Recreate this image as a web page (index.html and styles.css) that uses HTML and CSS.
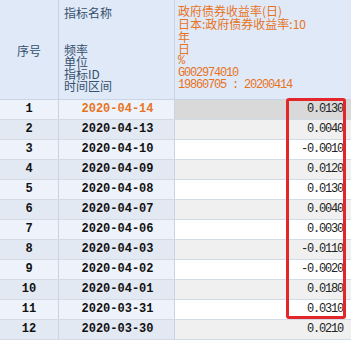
FILE: index.html
```html
<!DOCTYPE html>
<html>
<head>
<meta charset="utf-8">
<link rel="stylesheet" href="styles.css">
</head>
<body>
<div class="sheet">
  <div class="head">
    <div class="h-idx">序号</div>
    <div class="h-labels">
      <div class="l">指标名称</div>
      <div class="l"></div>
      <div class="l"></div>
      <div class="l">频率</div>
      <div class="l">单位</div>
      <div class="l">指标ID</div>
      <div class="l">时间区间</div>
    </div>
    <div class="h-vals">
      <div class="l">政府债券收益率(日)</div>
      <div class="l">日本:政府债券收益率:10</div>
      <div class="l">年</div>
      <div class="l">日</div>
      <div class="l">%</div>
      <div class="l">G002974010</div>
      <div class="l">19860705 : 20200414</div>
    </div>
  </div>
  <div class="rows">
    <div class="row odd sel"><div class="c-idx">1</div><div class="c-date hl">2020-04-14</div><div class="c-val">0.0130</div></div>
    <div class="row even"><div class="c-idx">2</div><div class="c-date">2020-04-13</div><div class="c-val">0.0040</div></div>
    <div class="row odd"><div class="c-idx">3</div><div class="c-date">2020-04-10</div><div class="c-val">-0.0010</div></div>
    <div class="row even"><div class="c-idx">4</div><div class="c-date">2020-04-09</div><div class="c-val">0.0120</div></div>
    <div class="row odd"><div class="c-idx">5</div><div class="c-date">2020-04-08</div><div class="c-val">0.0130</div></div>
    <div class="row even"><div class="c-idx">6</div><div class="c-date">2020-04-07</div><div class="c-val">0.0040</div></div>
    <div class="row odd"><div class="c-idx">7</div><div class="c-date">2020-04-06</div><div class="c-val">0.0030</div></div>
    <div class="row even"><div class="c-idx">8</div><div class="c-date">2020-04-03</div><div class="c-val">-0.0110</div></div>
    <div class="row odd"><div class="c-idx">9</div><div class="c-date">2020-04-02</div><div class="c-val">-0.0020</div></div>
    <div class="row even"><div class="c-idx">10</div><div class="c-date">2020-04-01</div><div class="c-val">0.0180</div></div>
    <div class="row odd"><div class="c-idx">11</div><div class="c-date">2020-03-31</div><div class="c-val">0.0310</div></div>
    <div class="row even"><div class="c-idx">12</div><div class="c-date">2020-03-30</div><div class="c-val">0.0210</div></div>
  </div>
  <div class="mark"></div>
</div>
</body>
</html>
```
FILE: styles.css
```css
html, body {
  margin: 0;
  padding: 0;
  background: #ffffff;
}
.sheet {
  position: relative;
  width: 351px;
  height: 341px;
  overflow: hidden;
  font-family: "Noto Sans CJK SC", "Liberation Sans", sans-serif;
  font-size: 12px;
}
.head {
  display: grid;
  grid-template-columns: 59px 116px 176px;
  height: 99px;
  background: #dfe9f7;
  border-bottom: 1px solid #c9d5e5;
}
.h-idx {
  border-right: 1px solid #c7d3e3;
  display: flex;
  align-items: center;
  justify-content: center;
  color: #36506e;
  padding-top: 2px;
}
.h-labels {
  border-right: 1px solid #c7d3e3;
  padding: 7px 0 0 5px;
  color: #36506e;
}
.h-vals {
  padding: 5px 0 0 3px;
  color: #e8731e;
}
.l {
  height: 12px;
  line-height: 12px;
  white-space: nowrap;
}
.h-labels .l:first-child { height: 13px; }
.h-labels .l:nth-child(2), .h-labels .l:nth-child(3) { height: 12px; }
.h-vals .l:first-child, .h-vals .l:nth-child(2) { height: 13px; }
.h-vals .l:nth-child(5), .h-vals .l:nth-child(6), .h-vals .l:nth-child(7) {
  font-family: "Liberation Mono", monospace;
  font-size: 12px;
  letter-spacing: -1.2px;
}
.row {
  display: grid;
  grid-template-columns: 59px 116px 176px;
  height: 19px;
  border-bottom: 1px solid #d3dbe6;
  line-height: 19px;
}
.c-idx, .c-date {
  font-family: "Liberation Mono", monospace;
  font-weight: bold;
  font-size: 12px;
  color: #111111;
  text-align: center;
  border-right: 1px solid #c9d4e3;
}
.c-date { padding-left: 2px; }
.c-date.hl { color: #e8731e; }
.c-val {
  font-family: "Liberation Mono", monospace;
  font-size: 12px;
  letter-spacing: -1.2px;
  text-align: right;
  padding-right: 8px;
  color: #222222;
  border-bottom-color: #dcdcdc;
}
.odd .c-idx, .odd .c-date { background: #eef3fb; }
.even .c-idx, .even .c-date { background: #e3e9f2; }
.odd .c-val { background: #ffffff; }
.even .c-val { background: #f0f0f0; }
.sel .c-val { background: #d9d9d9; }
.mark {
  position: absolute;
  left: 286px;
  top: 98px;
  width: 54px;
  height: 215px;
  border: 3px solid #e3262a;
  border-radius: 3px;
}
```
